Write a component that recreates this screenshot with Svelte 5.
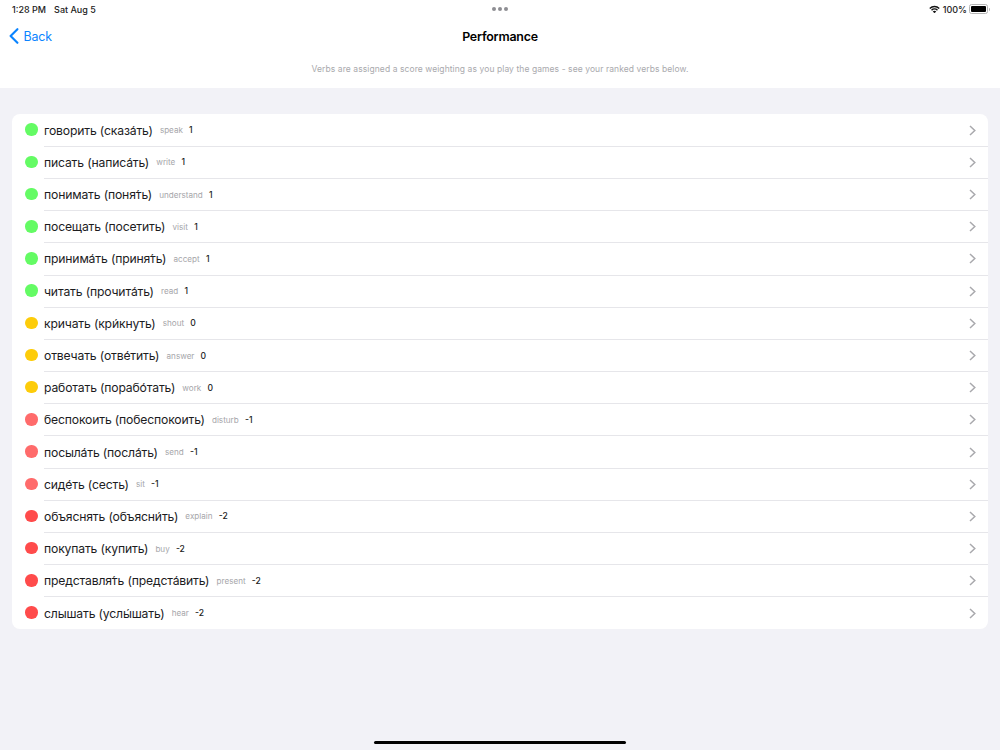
<script>
  const green = '#64fb64', yellow = '#fdcc0a', salmon = '#ff6b6b', red = '#ff4b4b';
  const rows = [
    ['говорить (сказа́ть)', 'speak', '1', green],
    ['писать (написа́ть)', 'write', '1', green],
    ['понимать (поня́ть)', 'understand', '1', green],
    ['посещать (посетить)', 'visit', '1', green],
    ['принима́ть (приня́ть)', 'accept', '1', green],
    ['читать (прочита́ть)', 'read', '1', green],
    ['кричать (кри́кнуть)', 'shout', '0', yellow],
    ['отвечать (отве́тить)', 'answer', '0', yellow],
    ['работать (порабо́тать)', 'work', '0', yellow],
    ['беспокоить (побеспокоить)', 'disturb', '-1', salmon],
    ['посыла́ть (посла́ть)', 'send', '-1', salmon],
    ['сиде́ть (сесть)', 'sit', '-1', salmon],
    ['объяснять (объясни́ть)', 'explain', '-2', red],
    ['покупать (купить)', 'buy', '-2', red],
    ['представля́ть (предста́вить)', 'present', '-2', red],
    ['слышать (услы́шать)', 'hear', '-2', red]
  ];
</script>

<div class="page">
  <header class="top">
    <div class="status">
      <div class="status-left"><span>1:28 PM</span><span>Sat Aug 5</span></div>
      <div class="dots"><i></i><i></i><i></i></div>
      <div class="status-right">
        <svg width="11" height="8.5" viewBox="0 0 12 9" aria-hidden="true">
          <path d="M0.3 3.1A8.2 8.2 0 0 1 11.7 3.1L10.6 4.2A6.6 6.6 0 0 0 1.4 4.2Z" fill="#111"/>
          <path d="M2.2 5A5.5 5.5 0 0 1 9.8 5L8.7 6.1A4 4 0 0 0 3.3 6.1Z" fill="#111"/>
          <path d="M4.1 6.9A2.8 2.8 0 0 1 7.9 6.9L6 8.8Z" fill="#111"/>
        </svg>
        <span>100%</span>
        <div class="battery"><div class="battery-fill"></div></div>
        <div class="battery-cap"></div>
      </div>
    </div>
    <nav class="nav">
      <div class="back">
        <svg width="10" height="16" viewBox="0 0 10 16" aria-hidden="true">
          <path d="M8.4 1.2 1.6 8l6.8 6.8" fill="none" stroke="#0a84ff" stroke-width="2.1" stroke-linecap="round" stroke-linejoin="round"/>
        </svg>
        <span>Back</span>
      </div>
      <h1>Performance</h1>
    </nav>
    <p class="sub">Verbs are assigned a score weighting as you play the games - see your ranked verbs below.</p>
  </header>

  <main class="content">
    <ul class="card">
      {#each rows as [verb, en, score, color]}
        <li class="row">
          <span class="dot" style:background={color}></span>
          <div class="body">
            <span class="verb">{verb}</span>
            <span class="en">{en}</span>
            <span class="score">{score}</span>
            <svg class="chev" width="7" height="11" viewBox="0 0 7 11" aria-hidden="true">
              <path d="M1 1l4.8 4.5L1 10" fill="none" stroke="#a9a9ad" stroke-width="1.5"/>
            </svg>
          </div>
        </li>
      {/each}
    </ul>
  </main>
  <div class="home"></div>
</div>

<style>
  :global(body) { margin: 0; background: #f2f2f7; }
  .page {
    width: 1000px; height: 750px; position: relative; overflow: hidden;
    background: #f2f2f7; font-family: Inter, "Noto Sans", sans-serif; color: #111;
  }
  .top { background: #fff; height: 88px; display: flex; flex-direction: column; }
  .status {
    height: 18px; padding: 0 10px 0 12px; display: flex; align-items: center;
    justify-content: space-between; position: relative;
    font-size: 9px; font-weight: 500; color: #222;
  }
  .status-left { display: flex; gap: 8px; }
  .dots { position: absolute; left: 492px; top: 7px; display: flex; gap: 2px; }
  .dots i { width: 4px; height: 4px; border-radius: 50%; background: #8e8e93; }
  .status-right { display: flex; align-items: center; }
  .status-right span { margin-left: 2.5px; margin-right: 2px; }
  .battery {
    width: 15px; height: 6px; border: 1px solid #b5b5b5; border-radius: 2.5px; padding: 1px;
    box-sizing: content-box; display: flex;
  }
  .battery-fill { flex: 1; background: #000; border-radius: 1px; }
  .battery-cap { width: 1px; height: 3px; background: #b5b5b5; margin-left: 1px; border-radius: 0 1px 1px 0; }
  .nav { height: 36px; position: relative; display: flex; align-items: center; justify-content: center; }
  .back {
    position: absolute; left: 8.5px; top: 0; height: 36px; display: flex; align-items: center;
    gap: 5px; color: #0a84ff; font-size: 12.4px; letter-spacing: -0.1px;
  }
  h1 { margin: 0; font-size: 12.4px; font-weight: 600; color: #000; letter-spacing: -0.2px; }
  .sub {
    margin: 8px 0 0; text-align: center; font-size: 8.5px; line-height: 14px; color: #a9a9ad;
    letter-spacing: 0.08px;
  }
  .content { padding: 25.6px 12px 0; }
  .card { margin: 0; padding: 0; list-style: none; background: #fff; border-radius: 8px; overflow: hidden; }
  .row { height: 32.2px; display: flex; align-items: center; padding-left: 13px; box-sizing: border-box; }
  .dot { width: 12.5px; height: 12.5px; border-radius: 50%; flex: none; margin-right: 6.5px; }
  .body {
    flex: 1; align-self: stretch; display: flex; align-items: center; padding-right: 12px;
    border-top: 1px solid #e6e6ea; box-sizing: border-box; min-width: 0;
  }
  .row:first-child .body { border-top-color: transparent; }
  .verb { font-size: 12.2px; color: #1c1c1e; letter-spacing: -0.17px; }
  .en { font-size: 8.1px; color: #a6a6aa; margin-left: 7.2px; }
  .score { font-size: 8.6px; font-weight: 500; color: #222; margin-left: 6.2px; }
  .chev { margin-left: auto; }
  .home {
    position: absolute; left: 374px; top: 741px; width: 252px; height: 3px;
    border-radius: 2px; background: #000;
  }
</style>
